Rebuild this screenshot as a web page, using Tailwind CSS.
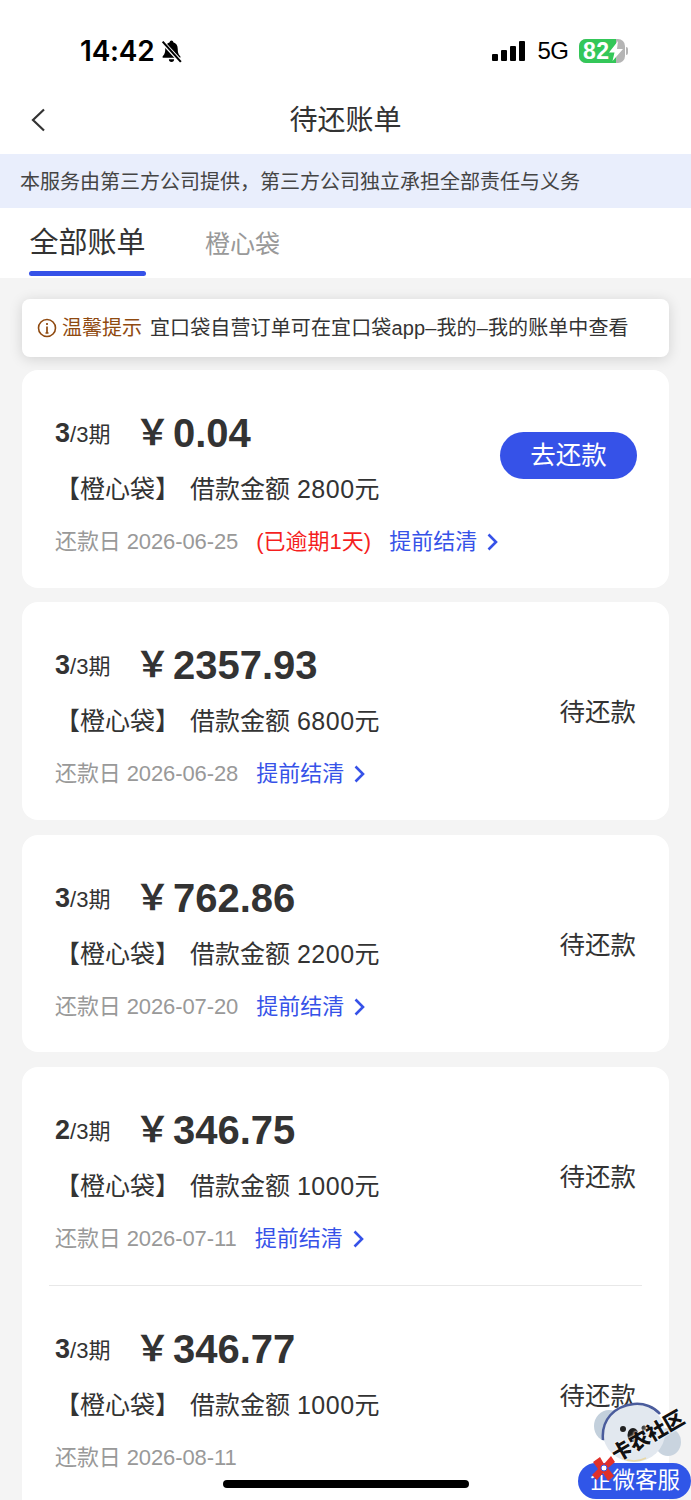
<!DOCTYPE html>
<html lang="zh-CN">
<head>
<meta charset="utf-8">
<script src="https://cdn.jsdelivr.net/npm/@tailwindcss/browser@4"></script>
<title>待还账单</title>
</head>
<body class="m-0">
<div class="relative w-[691px] h-[1500px] overflow-hidden bg-[#f4f4f4] font-['Liberation_Sans','Noto_Sans_CJK_SC',sans-serif] text-[#333]">

  <!-- status bar -->
  <div class="h-[88px] bg-white flex items-start pt-[34px] pl-[80px] pr-[63px] justify-between">
    <div class="flex items-center h-[34px] text-black">
      <span class="text-[28px] font-['Inter'] font-semibold leading-none tracking-[-0.2px]">14:42</span>
      <svg class="ml-[4px]" width="25" height="25" viewBox="0 0 24 24"><path d="M12 1.500c-1 0-1.600.7-1.700 1.500C7.600 3.800 6 6 6 9.500c0 4-1 5.500-2.500 7V18h17v-1.500C19 15 18 13.500 18 9.500c0-3.500-1.600-5.700-4.300-6.500C13.600 2.200 13 1.500 12 1.500zM9.500 19.500a2.500 2.500 0 0 0 5 0z" fill="#000"/><path d="M3 2.500 21 22" stroke="#fff" stroke-width="4"/><path d="M3.500 2.500 21 22" stroke="#000" stroke-width="2"/></svg>
    </div>
    <div class="flex items-center h-[34px]">
      <div class="flex items-end gap-[3px] h-[20px] mt-[-1px]">
        <span class="w-[6px] h-[7px] bg-black rounded-[1px]"></span>
        <span class="w-[6px] h-[11px] bg-black rounded-[1px]"></span>
        <span class="w-[6px] h-[15px] bg-black rounded-[1px]"></span>
        <span class="w-[6px] h-[20px] bg-black rounded-[1px]"></span>
      </div>
      <span class="ml-[13px] text-[24px] leading-none text-black tracking-[-0.8px]">5G</span>
      <div class="relative ml-[11px] w-[46px] h-[24px] rounded-[7px] bg-[#b5b5b5] overflow-hidden">
        <div class="absolute inset-y-0 left-0 w-[37px] bg-[#34c759] flex items-center pl-[4px]">
          <span class="text-[23px] font-bold text-white leading-none tracking-[0.5px]">82</span>
        </div>
        <svg class="absolute left-[29px] top-[2px]" width="16" height="20" viewBox="0 0 16 20"><path d="M10 0 1 11.500h5.500L4.500 20 15 8H9z" fill="#fff"/></svg>
      </div>
      <span class="ml-[1px] w-[2px] h-[8px] bg-[#b5b5b5] rounded-r-[2px]"></span>
    </div>
  </div>

  <!-- nav -->
  <div class="relative h-[66px] bg-white flex items-center justify-center">
    <svg class="absolute left-[28px] top-[19px]" width="20" height="26" viewBox="0 0 20 26" fill="none"><path d="M16 2.500 5 13l11 10.500" stroke="#333" stroke-width="2.200"/></svg>
    <h1 class="text-[28px] font-normal leading-none text-[#333]">待还账单</h1>
  </div>

  <!-- banner -->
  <div class="h-[54px] bg-[#e9eefc] pl-[20px] pt-[2px] flex items-center text-[20px] text-[#444] leading-none whitespace-nowrap">本服务由第三方公司提供，第三方公司独立承担全部责任与义务</div>

  <!-- tabs -->
  <div class="h-[70px] bg-white flex items-start pl-[29px] gap-[59px] pt-[19px]">
    <div class="flex flex-col items-center">
      <span class="text-[29px] leading-[33px] text-[#333]">全部账单</span>
      <span class="mt-[11px] w-[117px] h-[5px] rounded-[3px] bg-[#3652e8]"></span>
    </div>
    <span class="text-[25px] leading-[34px] text-[#999]">橙心袋</span>
  </div>

  <!-- list -->
  <div class="px-[22px] pt-[21px] flex flex-col">
    <div class="h-[58px] rounded-[8px] bg-white shadow-[0_2px_14px_rgba(0,0,0,0.14)] flex items-center pl-[15px] whitespace-nowrap">
      <svg width="20" height="20" viewBox="0 0 20 20" fill="none"><circle cx="10" cy="10" r="8.500" stroke="#8f4a10" stroke-width="1.600"/><path d="M10 5v2M10 8.500V15M8.500 15h3" stroke="#8f4a10" stroke-width="1.700"/></svg>
      <span class="ml-[5px] text-[20px] text-[#8f4a10] leading-none">温馨提示</span>
      <span class="ml-[8px] text-[20px] text-[#333] leading-none tracking-[0.12px]">宜口袋自营订单可在宜口袋app–我的–我的账单中查看</span>
    </div>

    <!-- card 1 -->
    <div class="mt-[13px] h-[218px] rounded-[16px] bg-white relative pl-[33px] pr-[32px]">
      <div class="flex items-center h-[44px] relative top-[41px]">
        <span class="w-[80px] text-[22px] leading-none"><b class="text-[27px]">3</b>/3期</span><span class="w-[38px] text-[35px] font-bold leading-[44px]">￥</span><span class="text-[40px] font-bold leading-[44px]">0.04</span>
      </div>
      <div class="mt-[59px] h-[32px] text-[25px] leading-[32px] whitespace-nowrap">【橙心袋】<span class="ml-[10px]">借款金额 <span class="tracking-[0.5px]">2800</span>元</span></div>
      <div class="mt-[24px] flex items-center text-[22px] leading-[26px] whitespace-nowrap">
        <span class="text-[#999] tracking-[-0.1px]">还款日 2026-06-25</span>
        <span class="ml-[18px] text-[#f51f1f]">(已逾期1天)</span>
        <span class="ml-[18px] text-[#3652e8]">提前结清</span>
        <svg class="ml-[9px]" width="13" height="20" viewBox="0 0 13 20" fill="none"><path d="M2.500 2.500 10 10l-7.500 7.500" stroke="#3652e8" stroke-width="2.600"/></svg>
      </div>
      <button class="absolute left-[478px] top-[62px] w-[137px] h-[47px] rounded-full bg-[#3652e8] text-white text-[25.500px] leading-none">去还款</button>
    </div>

    <!-- card 2 -->
    <div class="mt-[14px] h-[218px] rounded-[16px] bg-white pl-[33px] pr-[33px] flex items-start justify-between">
      <div>
        <div class="flex items-center h-[44px] mt-[41px]">
          <span class="w-[80px] text-[22px] leading-none"><b class="text-[27px]">3</b>/3期</span><span class="w-[38px] text-[35px] font-bold leading-[44px]">￥</span><span class="text-[40px] font-bold leading-[44px]">2357.93</span>
        </div>
        <div class="mt-[18px] h-[32px] text-[25px] leading-[32px] whitespace-nowrap">【橙心袋】<span class="ml-[10px]">借款金额 <span class="tracking-[0.5px]">6800</span>元</span></div>
        <div class="mt-[24px] flex items-center text-[22px] leading-[26px] whitespace-nowrap">
          <span class="text-[#999] tracking-[-0.1px]">还款日 2026-06-28</span>
          <span class="ml-[18px] text-[#3652e8]">提前结清</span>
          <svg class="ml-[9px]" width="13" height="20" viewBox="0 0 13 20" fill="none"><path d="M2.500 2.500 10 10l-7.500 7.500" stroke="#3652e8" stroke-width="2.600"/></svg>
        </div>
      </div>
      <span class="mt-[94px] text-[25.500px] leading-[32px]">待还款</span>
    </div>

    <!-- card 3 -->
    <div class="mt-[15px] h-[217px] rounded-[16px] bg-white pl-[33px] pr-[33px] flex items-start justify-between">
      <div>
        <div class="flex items-center h-[44px] mt-[41px]">
          <span class="w-[80px] text-[22px] leading-none"><b class="text-[27px]">3</b>/3期</span><span class="w-[38px] text-[35px] font-bold leading-[44px]">￥</span><span class="text-[40px] font-bold leading-[44px]">762.86</span>
        </div>
        <div class="mt-[18px] h-[32px] text-[25px] leading-[32px] whitespace-nowrap">【橙心袋】<span class="ml-[10px]">借款金额 <span class="tracking-[0.5px]">2200</span>元</span></div>
        <div class="mt-[24px] flex items-center text-[22px] leading-[26px] whitespace-nowrap">
          <span class="text-[#999] tracking-[-0.1px]">还款日 2026-07-20</span>
          <span class="ml-[18px] text-[#3652e8]">提前结清</span>
          <svg class="ml-[9px]" width="13" height="20" viewBox="0 0 13 20" fill="none"><path d="M2.500 2.500 10 10l-7.500 7.500" stroke="#3652e8" stroke-width="2.600"/></svg>
        </div>
      </div>
      <span class="mt-[94px] text-[25.500px] leading-[32px]">待还款</span>
    </div>

    <!-- card 4 -->
    <div class="mt-[15px] h-[450px] rounded-[16px] bg-white flex flex-col">
      <div class="mx-[27px] h-[219px] border-b border-[#e8e8e8] pl-[6px] pr-[6px] flex items-start justify-between">
        <div>
          <div class="flex items-center h-[44px] mt-[41px]">
            <span class="w-[80px] text-[22px] leading-none"><b class="text-[27px]">2</b>/3期</span><span class="w-[38px] text-[35px] font-bold leading-[44px]">￥</span><span class="text-[40px] font-bold leading-[44px]">346.75</span>
          </div>
          <div class="mt-[18px] h-[32px] text-[25px] leading-[32px] whitespace-nowrap">【橙心袋】<span class="ml-[10px]">借款金额 <span class="tracking-[0.5px]">1000</span>元</span></div>
          <div class="mt-[24px] flex items-center text-[22px] leading-[26px] whitespace-nowrap">
            <span class="text-[#999] tracking-[-0.1px]">还款日 2026-07-11</span>
            <span class="ml-[18px] text-[#3652e8]">提前结清</span>
            <svg class="ml-[9px]" width="13" height="20" viewBox="0 0 13 20" fill="none"><path d="M2.500 2.500 10 10l-7.500 7.500" stroke="#3652e8" stroke-width="2.600"/></svg>
          </div>
        </div>
        <span class="mt-[94px] text-[25.500px] leading-[32px]">待还款</span>
      </div>
      <div class="mx-[27px] pl-[6px] pr-[6px] flex items-start justify-between">
        <div>
          <div class="flex items-center h-[44px] mt-[41px]">
            <span class="w-[80px] text-[22px] leading-none"><b class="text-[27px]">3</b>/3期</span><span class="w-[38px] text-[35px] font-bold leading-[44px]">￥</span><span class="text-[40px] font-bold leading-[44px]">346.77</span>
          </div>
          <div class="mt-[18px] h-[32px] text-[25px] leading-[32px] whitespace-nowrap">【橙心袋】<span class="ml-[10px]">借款金额 <span class="tracking-[0.5px]">1000</span>元</span></div>
          <div class="mt-[24px] flex items-center text-[22px] leading-[26px] whitespace-nowrap">
            <span class="text-[#999] tracking-[-0.1px]">还款日 2026-08-11</span>
          </div>
        </div>
        <span class="mt-[94px] text-[25.500px] leading-[32px]">待还款</span>
      </div>
    </div>
  </div>

  <!-- floating service button -->
  <div class="absolute left-[578px] top-[1463px] w-[113px] h-[36px] rounded-[18px] bg-[#3056e8] text-white text-[22.500px] leading-[36px] pl-[12px] whitespace-nowrap">企微客服</div>

  <!-- mascot + watermark -->
  <svg class="absolute left-[592px] top-[1402px]" width="92" height="62" viewBox="0 0 92 62">
    <ellipse cx="17" cy="24" rx="15" ry="16" fill="#c3d0dc"/>
    <ellipse cx="76" cy="40" rx="13" ry="14" fill="#c9d4df"/>
    <ellipse cx="42" cy="31" rx="31" ry="29" fill="#e2e8ef"/>
    <path d="M11 38C9 18 22 4 42 2c10-1 20 3 26 10" fill="none" stroke="#4a5c9c" stroke-width="2.500"/>
    <circle cx="31" cy="27" r="3" fill="#222"/>
    <circle cx="52" cy="26" r="2.500" fill="#444"/>
    <ellipse cx="41" cy="33" rx="5.500" ry="7" fill="#1c1c1c"/>
    <path d="M30 56q12 6 24 0" fill="none" stroke="#e8d8a8" stroke-width="1.500"/>
  </svg>
  <div class="absolute left-[608px] top-[1426px] -rotate-[30deg] text-[20px] font-black text-[#111] leading-none whitespace-nowrap [text-shadow:0_0_2px_#fff,0_0_2px_#fff]">卡农社区</div>
  <svg class="absolute left-[591px] top-[1454px]" width="26" height="28" viewBox="0 0 26 28"><path d="M2 8 9 3l4 7 7-8 4 6-7 6 6 8-6 5-5-8-6 7-5-5 6-6z" fill="#e0302a"/><circle cx="13" cy="14" r="3" fill="#fff" stroke="#3056e8"/></svg>

  <!-- home indicator -->
  <div class="absolute left-[223px] top-[1480px] w-[246px] h-[8px] rounded-full bg-black"></div>
</div>
</body>
</html>
